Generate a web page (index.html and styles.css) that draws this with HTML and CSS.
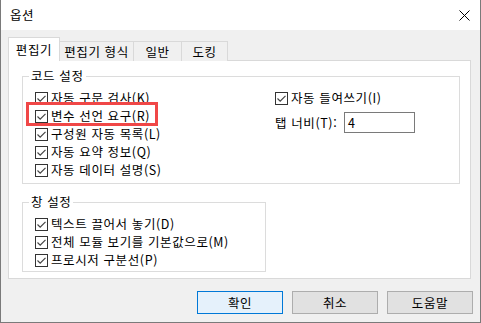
FILE: index.html
```html
<!DOCTYPE html>
<html lang="ko">
<head>
<meta charset="utf-8">
<link rel="stylesheet" href="styles.css">
</head>
<body>
<div class="window">
  <div class="titlebar">
    <span class="title">옵션</span>
    <svg class="close" width="11" height="11" viewBox="0 0 11 11"><path d="M0.5 0.5L10.5 10.5M10.5 0.5L0.5 10.5" stroke="#000" stroke-width="1" fill="none"/></svg>
  </div>
  <div class="client">
    <div class="tabs">
      <div class="tab active t1">편집기</div>
      <div class="tab t2">편집기 형식</div>
      <div class="tab t3">일반</div>
      <div class="tab t4">도킹</div>
    </div>
    <div class="panel">
      <fieldset class="group code">
        <legend>코드 설정</legend>
        <div class="cols">
          <div class="col left">
            <div class="cb"><span class="box"><svg viewBox="0 0 11 11"><path d="M1.5 5.5L4.2 8.2L9.5 2.8" stroke="#444" stroke-width="1.2" fill="none"/></svg></span><span>자동 구문 검사(K)</span></div>
            <div class="cb hl"><span class="box"><svg viewBox="0 0 11 11"><path d="M1.5 5.5L4.2 8.2L9.5 2.8" stroke="#444" stroke-width="1.2" fill="none"/></svg></span><span>변수 선언 요구(R)</span><span class="mark"></span></div>
            <div class="cb"><span class="box"><svg viewBox="0 0 11 11"><path d="M1.5 5.5L4.2 8.2L9.5 2.8" stroke="#444" stroke-width="1.2" fill="none"/></svg></span><span>구성원 자동 목록(L)</span></div>
            <div class="cb"><span class="box"><svg viewBox="0 0 11 11"><path d="M1.5 5.5L4.2 8.2L9.5 2.8" stroke="#444" stroke-width="1.2" fill="none"/></svg></span><span>자동 요약 정보(Q)</span></div>
            <div class="cb"><span class="box"><svg viewBox="0 0 11 11"><path d="M1.5 5.5L4.2 8.2L9.5 2.8" stroke="#444" stroke-width="1.2" fill="none"/></svg></span><span>자동 데이터 설명(S)</span></div>
          </div>
          <div class="col right">
            <div class="cb"><span class="box"><svg viewBox="0 0 11 11"><path d="M1.5 5.5L4.2 8.2L9.5 2.8" stroke="#444" stroke-width="1.2" fill="none"/></svg></span><span>자동 들여쓰기(I)</span></div>
            <div class="tabwidth"><span class="lbl">탭 너비(T):</span><span class="input">4</span></div>
          </div>
        </div>
      </fieldset>
      <fieldset class="group win">
        <legend>창 설정</legend>
        <div class="cb"><span class="box"><svg viewBox="0 0 11 11"><path d="M1.5 5.5L4.2 8.2L9.5 2.8" stroke="#444" stroke-width="1.2" fill="none"/></svg></span><span>텍스트 끌어서 놓기(D)</span></div>
        <div class="cb"><span class="box"><svg viewBox="0 0 11 11"><path d="M1.5 5.5L4.2 8.2L9.5 2.8" stroke="#444" stroke-width="1.2" fill="none"/></svg></span><span>전체 모듈 보기를 기본값으로(M)</span></div>
        <div class="cb"><span class="box"><svg viewBox="0 0 11 11"><path d="M1.5 5.5L4.2 8.2L9.5 2.8" stroke="#444" stroke-width="1.2" fill="none"/></svg></span><span>프로시저 구분선(P)</span></div>
      </fieldset>
    </div>
    <div class="buttons">
      <div class="btn default">확인</div>
      <div class="btn">취소</div>
      <div class="btn">도움말</div>
    </div>
  </div>
</div>
</body>
</html>
```

FILE: styles.css
```css
* { box-sizing: border-box; }
html, body { margin: 0; padding: 0; }
body {
  width: 481px;
  height: 323px;
  overflow: hidden;
  background: #f0f0f0;
  font-family: "Noto Sans CJK KR", "Malgun Gothic", sans-serif;
  font-size: 12.5px;
  letter-spacing: 0.6px;
  color: #000;
}
.window {
  width: 481px;
  height: 323px;
  border: 1px solid #7a7a7a;
  border-top: none;
  display: flex;
  flex-direction: column;
  background: #f0f0f0;
}
.titlebar {
  height: 30px;
  flex: none;
  background: #fff;
  display: flex;
  align-items: center;
  justify-content: space-between;
  padding: 0 10px 0 9px;
}
.title { line-height: 16px; }
.close { display: block; }
.client {
  flex: 1;
  padding: 7px 0 0 7px;
  display: flex;
  flex-direction: column;
}
.tabs {
  display: flex;
  align-items: flex-end;
  height: 24px;
  margin-bottom: -1px;
  position: relative;
  z-index: 1;
}
.tab {
  height: 20px;
  border: 1px solid #d9d9d9;
  border-bottom: none;
  background: #f0f0f0;
  display: flex;
  align-items: center;
  justify-content: center;
  line-height: 16px;
  margin-left: -1px;
  white-space: nowrap;
}
.tab.active {
  height: 24px;
  background: #fff;
  margin-left: 0;
}
.t1 { width: 52px; }
.t2 { width: 75px; }
.t3 { width: 49px; }
.t4 { width: 47px; }
.panel {
  width: 463px;
  height: 219px;
  border: 1px solid #d9d9d9;
  background: #fff;
  flex: none;
}
.group {
  margin: 0 0 0 13px;
  padding: 5px 0 0 12px;
  border: 1px solid #dcdcdc;
  min-width: 0;
}
.group legend {
  padding: 0 2px;
  margin-left: -6px;
  line-height: 16px;
}
.group.code { margin-top: 7px; width: 438px; height: 116px; }
.group.win { margin-top: 10px; width: 244px; height: 78px; }
.cols { display: flex; }
.col.left { width: 240px; }
.cb {
  display: flex;
  align-items: center;
  height: 18px;
  line-height: 16px;
  white-space: nowrap;
}
.box {
  width: 13px;
  height: 13px;
  border: 1px solid #333;
  background: #fff;
  margin-right: 3px;
  flex: none;
  display: block;
}
.box svg { display: block; width: 11px; height: 11px; }
.hl { position: relative; }
.mark {
  position: absolute;
  left: -9px;
  top: -5px;
  width: 132px;
  height: 24px;
  border: 3px solid #f04747;
}
.tabwidth {
  display: flex;
  align-items: center;
  margin-top: 5px;
  height: 21px;
}
.lbl { width: 69px; line-height: 16px; white-space: nowrap; }
.input {
  width: 71px;
  height: 21px;
  border: 1px solid #7a7a7a;
  background: #fff;
  padding-left: 3px;
  line-height: 19px;
}
.buttons {
  display: flex;
  justify-content: flex-end;
  gap: 9px;
  margin-top: 12px;
  padding-right: 7px;
}
.btn {
  width: 86px;
  height: 23px;
  border: 1px solid #adadad;
  background: #e1e1e1;
  display: flex;
  align-items: center;
  justify-content: center;
  line-height: 16px;
}
.btn.default {
  border-color: #0078d7;
  background: #e5f1fb;
}
```
